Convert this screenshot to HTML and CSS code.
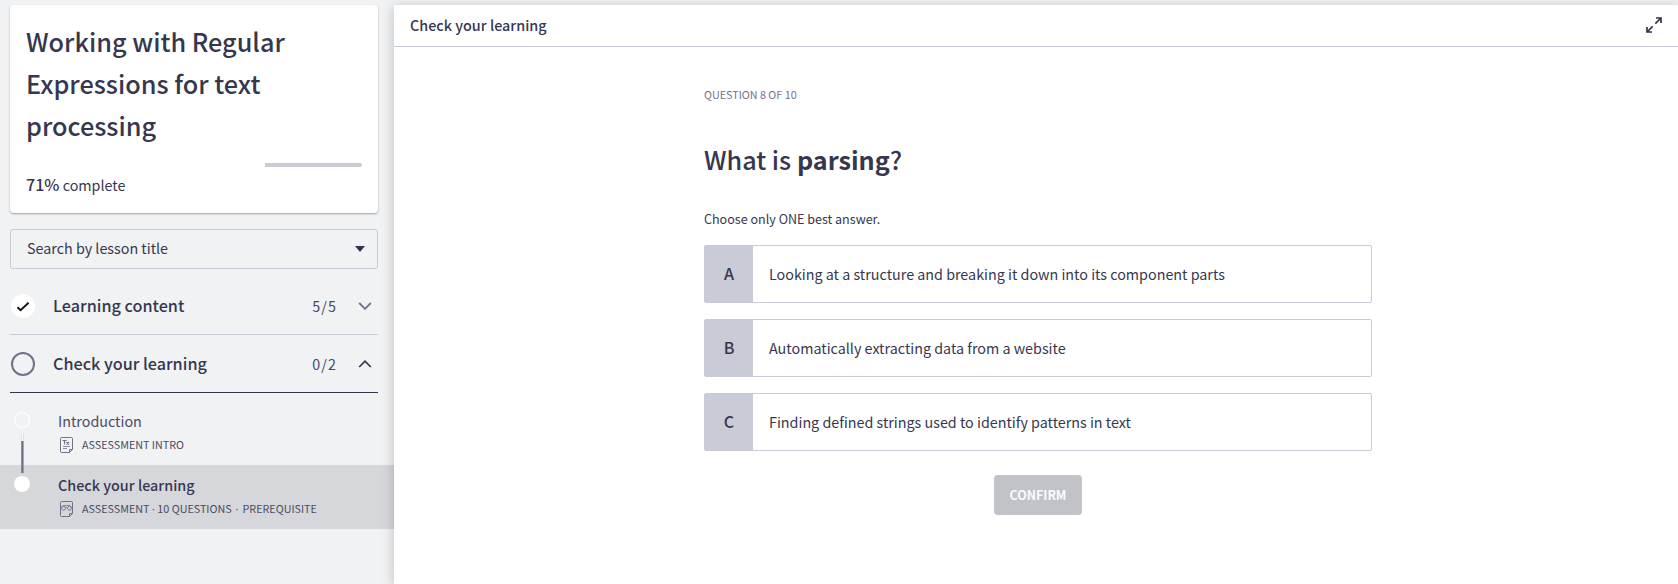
FILE: index.html
```html
<!DOCTYPE html>
<html lang="en">
<head>
<meta charset="utf-8">
<title>Check your learning</title>
<link rel="stylesheet" href="styles.css">
</head>
<body>
<div class="app">
  <aside class="sidebar">
    <section class="course-card">
      <h1 class="course-title">Working with Regular Expressions for text processing</h1>
      <div class="progress"><div class="progress-rest" style="width:97px"></div></div>
      <p class="progress-label"><span class="percent">71%</span> complete</p>
    </section>
    <div class="search">
      <span class="search-text">Search by lesson title</span>
      <svg class="caret" width="10" height="6" viewBox="0 0 10 6"><path d="M0 0h10L5 6z" fill="#33334d"/></svg>
    </div>
    <div class="group">
      <svg class="status" width="24" height="24" viewBox="0 0 24 24"><circle cx="12" cy="12" r="12" fill="#fff"/><path d="M6.500 13.200l3.100 3L17.600 8.700" fill="none" stroke="#111118" stroke-width="1.900"/></svg>
      <span class="group-name">Learning content</span>
      <span class="count">5/5</span>
      <svg class="chevron" width="14" height="8" viewBox="0 0 14 8"><path d="M1.200 1L7 6.800 12.800 1" fill="none" stroke="#71728a" stroke-width="1.800"/></svg>
    </div>
    <div class="group group-open">
      <svg class="status" width="24" height="24" viewBox="0 0 24 24"><circle cx="12" cy="12" r="11" fill="none" stroke="#71728a" stroke-width="2"/></svg>
      <span class="group-name">Check your learning</span>
      <span class="count">0/2</span>
      <svg class="chevron" width="14" height="8" viewBox="0 0 14 8"><path d="M1.200 7L7 1.200 12.800 7" fill="none" stroke="#33334d" stroke-width="1.700"/></svg>
    </div>
    <div class="lessons">
      <div class="lesson">
        <div class="lesson-name">Introduction</div>
        <div class="lesson-meta">
          <svg class="doc" width="13" height="16" viewBox="0 0 13 16" fill="none" stroke="#71728a"><path d="M1.500.5h10q1 0 1 1v11l-3 3h-8q-1 0-1-1v-13q0-1 1-1zM9.500 15.500v-3h3"/><path d="M2.500 3.500h4M4.500 3.500v4M6.500 5l2.500 2.500M9 5L6.500 7.500" stroke-width="1.100"/><path d="M3 9.500h7M3 11.500h4" stroke-width=".8"/></svg>
          <span>ASSESSMENT INTRO</span>
        </div>
      </div>
      <div class="lesson lesson-current">
        <div class="lesson-name">Check your learning</div>
        <div class="lesson-meta">
          <svg class="doc" width="13" height="16" viewBox="0 0 13 16" fill="none" stroke="#71728a"><path d="M1.500.5h10q1 0 1 1v11l-3 3h-8q-1 0-1-1v-13q0-1 1-1zM9.500 15.500v-3h3"/><path d="M1 7l2-2.500h7L12 7M5.200 7q1.300-1.300 2.600 0" stroke-width=".8"/><circle cx="3.500" cy="7.300" r="1.900" stroke-width=".9"/><circle cx="9.500" cy="7.300" r="1.900" stroke-width=".9"/></svg>
          <span>ASSESSMENT<span class="dot"> · </span>10 QUESTIONS<span class="dot dot-wide"> · </span>PREREQUISITE</span>
        </div>
      </div>
      <svg class="track" width="16" height="82" viewBox="0 0 16 82"><circle cx="8" cy="8" r="7.400" fill="none" stroke="#fff" stroke-width="1.200"/><path d="M7.400 21v8M9.400 21v8" stroke="#d3d4d8" stroke-width=".8"/><path d="M8.400 21v8" stroke="#fff" stroke-width="1.200"/><path d="M8.400 29v32" stroke="#71728a" stroke-width="2.400"/><circle cx="8" cy="72" r="8" fill="#fff"/></svg>
    </div>
  </aside>
  <main class="content">
    <header class="topbar">
      <span class="topbar-title">Check your learning</span>
      <svg width="16" height="16" viewBox="0 0 16 16" fill="none" stroke="#33334d" stroke-width="1.700"><path d="M9.300 6.700L14.500 1.500M10 1H15v5M6.700 9.300L1.500 14.500M1 10V15h5"/></svg>
    </header>
    <section class="quiz">
      <div class="step">QUESTION 8 OF 10</div>
      <h2 class="question">What is <b>parsing</b>?</h2>
      <div class="hint">Choose only ONE best answer.</div>
      <div class="options">
        <div class="option"><span class="letter">A</span><span class="answer">Looking at a structure and breaking it down into its component parts</span></div>
        <div class="option"><span class="letter">B</span><span class="answer">Automatically extracting data from a website</span></div>
        <div class="option"><span class="letter">C</span><span class="answer">Finding defined strings used to identify patterns in text</span></div>
      </div>
      <button class="confirm">CONFIRM</button>
    </section>
  </main>
</div>
</body>
</html>
```

FILE: styles.css
```css
* { box-sizing: border-box; }
body {
  margin: 0;
  background: #f1f2f4;
  color: #36374f;
  font-family: "Source Sans Pro", "Noto Sans CJK SC", "Noto Sans", sans-serif;
  font-size: 14.32px;
  line-height: 24px;
}
h1, h2, p { margin: 0; }
.app { display: flex; height: 584px; padding-top: 5px; overflow: hidden; }
.sidebar { width: 394px; flex: none; }
.course-card {
  height: 208px;
  margin: 0 16px 0 10px;
  padding: 15px 16px;
  background: #fff;
  border-radius: 4px;
  box-shadow: 0 1px 2px rgba(0, 0, 0, .35);
}
.course-title { font-size: 25.25px; line-height: 42px; font-weight: 500; }
.progress { display: flex; justify-content: flex-end; margin-top: 17px; }
.progress-rest { height: 4px; background: #c9cbd6; border-radius: 0 2px 2px 0; }
.progress-label { margin-top: 5px; }
.percent { font-size: 16.1px; font-weight: 500; }
.search {
  display: flex;
  align-items: center;
  justify-content: space-between;
  height: 40px;
  margin: 16px 16px 8px 10px;
  padding: 0 12px 0 16px;
  border: 1px solid #c9cbd6;
  border-radius: 3px;
}
.search-text { padding-bottom: 2px; }
.group {
  display: flex;
  align-items: center;
  height: 58px;
  margin: 0 16px 0 10px;
  padding: 0 6px 0 1px;
  border-bottom: 1px solid #c9cbd6;
}
.group-open { border-bottom-color: #33334d; }
.group-name { flex: 1; margin-left: 18px; padding-bottom: 2px; font-size: 16.2px; font-weight: 500; }
.count { margin-right: 21px; letter-spacing: 1.1px; color: #4a4b62; }
.lessons { position: relative; padding-top: 8px; }
.lesson { height: 64px; padding: 8px 0 0 58px; color: #4a4b62; }
.lesson-current { background: #d6d7db; }
.lesson-current .lesson-name { font-weight: 500; font-size: 14.38px; color: #36374f; }
.lesson-meta { display: flex; align-items: center; gap: 9px; height: 24px; font-size: 10.75px; }
.doc { margin-left: 2px; }
.dot { font-family: "Noto Sans", sans-serif; font-size: 10px; }
.dot-wide { padding: 0 1.5px; }
.track { position: absolute; left: 14px; top: 19px; }
.content { position: relative; flex: 1; background: #fff; box-shadow: 0 2px 12px rgba(0, 0, 0, .22); }
.topbar {
  display: flex;
  align-items: center;
  justify-content: space-between;
  height: 42px;
  padding: 0 16px 2px;
  border-bottom: 1px solid #c9cbd6;
  font-size: 14.38px;
  font-weight: 500;
}
.quiz { display: flex; flex-direction: column; width: 668px; margin-left: 310px; padding-top: 36px; }
.step { font-size: 10.75px; color: #71728a; }
.question { margin-top: 31px; font-size: 25.2px; line-height: 42px; font-weight: 500; }
.question b { font-weight: 700; }
.hint { margin-top: 27px; font-size: 12.55px; }
.options { display: grid; gap: 16px; margin-top: 14px; }
.option { display: flex; height: 58px; border: 1px solid #c9cbd6; border-radius: 2px; }
.letter {
  display: flex;
  align-items: center;
  justify-content: center;
  width: 48px;
  padding-bottom: 2px;
  background: #c9cbd6;
  font-size: 16.1px;
  font-weight: 500;
}
.answer { padding-left: 16px; line-height: 56px; }
.confirm {
  align-self: center;
  width: 88px;
  height: 40px;
  margin-top: 24px;
  padding: 0;
  border: 0;
  border-radius: 4px;
  background: #c2c3c9;
  color: #fafafc;
  font: 700 12.4px/40px "Source Sans Pro", "Noto Sans CJK SC", sans-serif;
}
```
